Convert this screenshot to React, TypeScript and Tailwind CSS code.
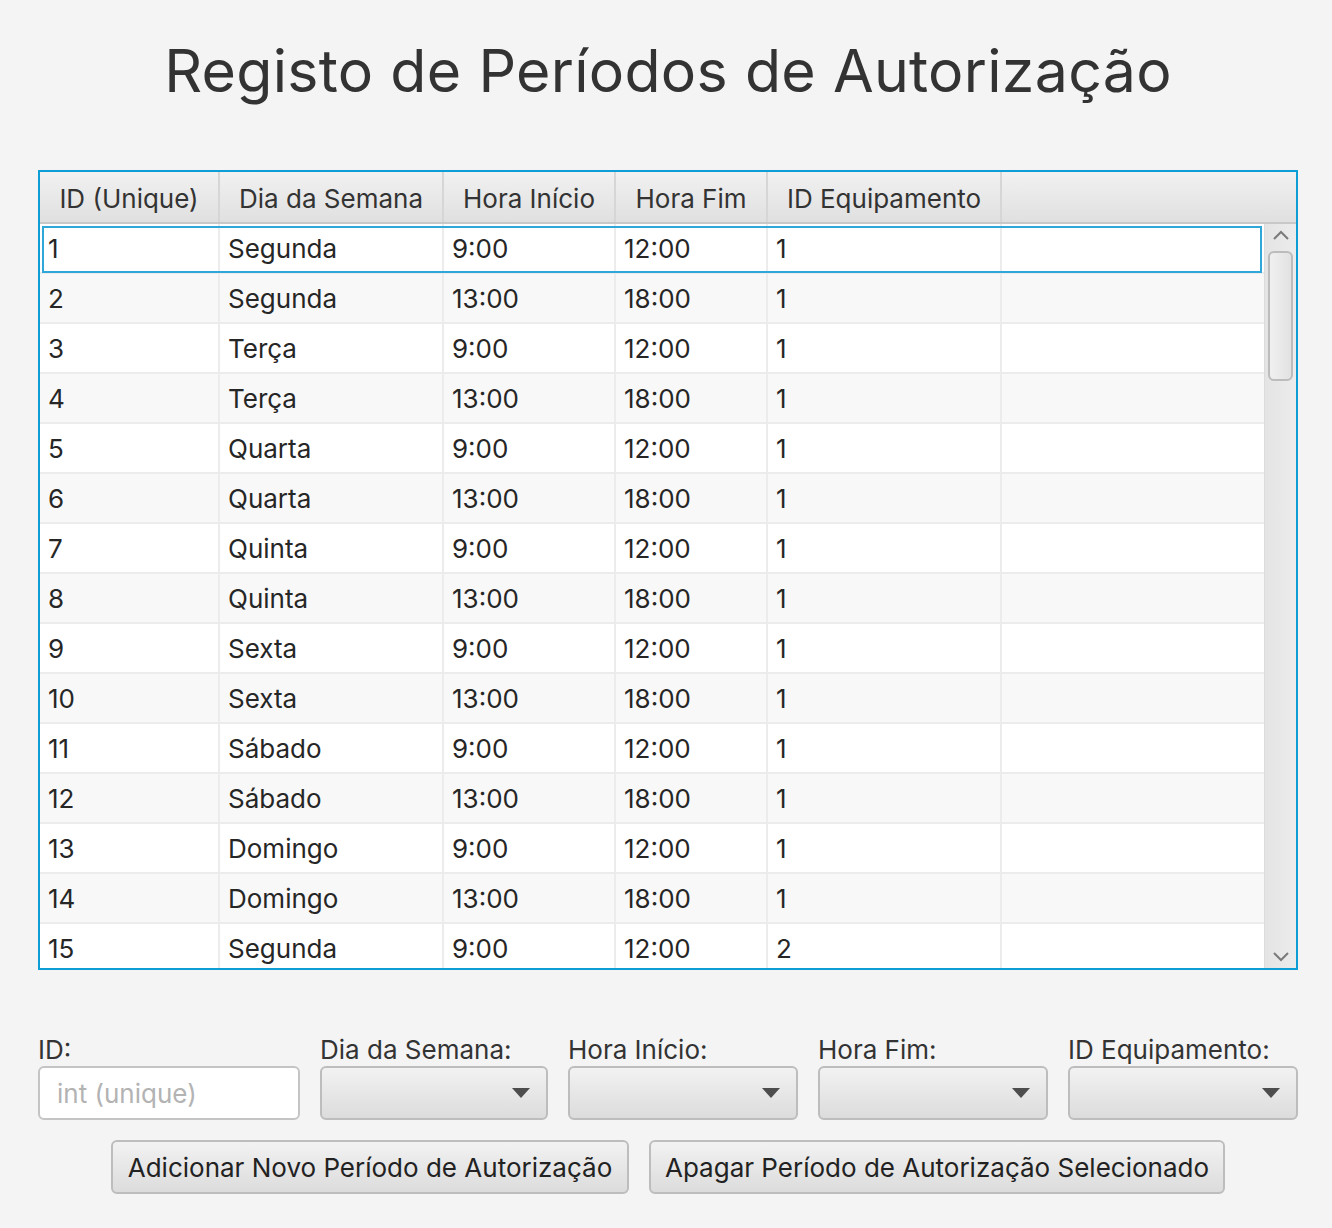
import React from "react";

const COLS = [
  { label: "ID (Unique)", w: "w-[180px]" },
  { label: "Dia da Semana", w: "w-[224px]" },
  { label: "Hora Início", w: "w-[172px]" },
  { label: "Hora Fim", w: "w-[152px]" },
  { label: "ID Equipamento", w: "w-[234px]" },
];

const ROWS = [
  ["1", "Segunda", "9:00", "12:00", "1"],
  ["2", "Segunda", "13:00", "18:00", "1"],
  ["3", "Terça", "9:00", "12:00", "1"],
  ["4", "Terça", "13:00", "18:00", "1"],
  ["5", "Quarta", "9:00", "12:00", "1"],
  ["6", "Quarta", "13:00", "18:00", "1"],
  ["7", "Quinta", "9:00", "12:00", "1"],
  ["8", "Quinta", "13:00", "18:00", "1"],
  ["9", "Sexta", "9:00", "12:00", "1"],
  ["10", "Sexta", "13:00", "18:00", "1"],
  ["11", "Sábado", "9:00", "12:00", "1"],
  ["12", "Sábado", "13:00", "18:00", "1"],
  ["13", "Domingo", "9:00", "12:00", "1"],
  ["14", "Domingo", "13:00", "18:00", "1"],
  ["15", "Segunda", "9:00", "12:00", "2"],
];

const FIELDS = [
  { label: "Dia da Semana:", w: "w-[228px]" },
  { label: "Hora Início:", w: "w-[230px]" },
  { label: "Hora Fim:", w: "w-[230px]" },
  { label: "ID Equipamento:", w: "w-[230px]" },
];

function Combo({ w }: { w: string }) {
  return (
    <div
      className={`${w} flex h-[54px] items-center justify-end rounded-[6px] border-2 border-[#bdbdbd] bg-gradient-to-b from-[#f2f2f2] to-[#dcdcdc] pr-[16px]`}
    >
      <svg width="18" height="10" viewBox="0 0 18 10">
        <path d="M0 0 H18 L9 10 Z" fill="#4d4d4d" />
      </svg>
    </div>
  );
}

export default function App() {
  return (
    <div
      className="flex h-[1228px] w-[1332px] flex-col bg-[#f4f4f4] pl-[38px] pr-[34px] text-[#333333]"
      style={{ fontFamily: "Inter, 'Noto Sans', sans-serif" }}
    >
      <h1 className="pt-[33px] text-center text-[59px] leading-[76px] tracking-[0.3px]">
        Registo de Períodos de Autorização
      </h1>

      {/* table */}
      <div className="mt-[61px] flex h-[800px] w-[1260px] flex-col overflow-hidden border-2 border-[#0e9ed6] bg-white">
        <div className="flex h-[52px] shrink-0 border-b-2 border-[#c8c8c8] bg-gradient-to-b from-[#f1f1f1] to-[#e0e0e0]">
          {COLS.map((c) => (
            <div
              key={c.label}
              className={`${c.w} flex items-center justify-center border-r-2 border-[#d6d6d6] pt-[2px] text-[26px] text-[#333333]`}
            >
              {c.label}
            </div>
          ))}
          <div className="flex-1" />
        </div>

        <div className="flex min-h-0 flex-1">
          <div className="flex-1 overflow-hidden">
            {ROWS.map((r, i) => (
              <div
                key={i}
                className={`relative flex h-[50px] border-b-2 border-[#ececec] ${
                  i % 2 === 0 ? "bg-white" : "bg-[#f8f8f8]"
                }`}
              >
                {r.map((v, j) => (
                  <div
                    key={j}
                    className={`${COLS[j].w} flex items-center border-r-2 border-[#ececec] pl-[8px] pt-[1px] text-[26px] text-[#262626]`}
                  >
                    {v}
                  </div>
                ))}
                <div className="flex-1" />
                {i === 0 && (
                  <div className="pointer-events-none absolute inset-x-[2px] top-[2px] bottom-[-1px] border-2 border-[#2fa7d8]" />
                )}
              </div>
            ))}
          </div>
          {/* scrollbar */}
          <div className="flex w-[32px] shrink-0 flex-col items-center border-l border-[#dcdcdc] bg-gradient-to-r from-[#e4e4e4] to-[#ececec]">
            <svg width="16" height="10" viewBox="0 0 16 10" className="mt-[6px]">
              <path d="M1 9 L8 2 L15 9" fill="none" stroke="#7a7a7a" strokeWidth="2" />
            </svg>
            <div className="mt-[11px] h-[130px] w-[25px] rounded-[6px] border-2 border-[#bcbcbc] bg-gradient-to-r from-[#f0f0f0] to-[#e2e2e2]" />
            <div className="flex-1" />
            <svg width="16" height="10" viewBox="0 0 16 10" className="mb-[6px]">
              <path d="M1 1 L8 8 L15 1" fill="none" stroke="#7a7a7a" strokeWidth="2" />
            </svg>
          </div>
        </div>
      </div>

      {/* form */}
      <div className="mt-[64px] flex gap-[20px]">
        <div className="flex flex-col">
          <span className="text-[26px] leading-[32px]">ID:</span>
          <div className="flex h-[54px] w-[262px] items-center rounded-[6px] border-2 border-[#c4c4c4] bg-white pl-[17px] text-[26px] text-[#b3b3b3]">
            int (unique)
          </div>
        </div>
        {FIELDS.map((f) => (
          <div key={f.label} className="flex flex-col">
            <span className="text-[26px] leading-[32px]">{f.label}</span>
            <Combo w={f.w} />
          </div>
        ))}
      </div>

      <div className="mt-[20px] flex justify-center gap-[20px]">
        <button className="h-[54px] w-[518px] rounded-[6px] border-2 border-[#bdbdbd] bg-gradient-to-b from-[#f2f2f2] to-[#dcdcdc] text-[26px] text-[#222222]">
          Adicionar Novo Período de Autorização
        </button>
        <button className="h-[54px] w-[576px] rounded-[6px] border-2 border-[#bdbdbd] bg-gradient-to-b from-[#f2f2f2] to-[#dcdcdc] text-[26px] text-[#222222]">
          Apagar Período de Autorização Selecionado
        </button>
      </div>
    </div>
  );
}
